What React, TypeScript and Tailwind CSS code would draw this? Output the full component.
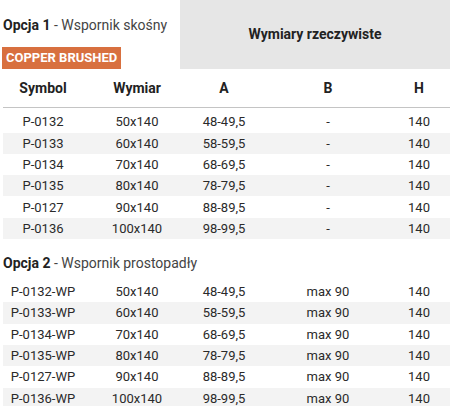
const opt1 = [
  ["P-0132", "50x140", "48-49,5", "-", "140"],
  ["P-0133", "60x140", "58-59,5", "-", "140"],
  ["P-0134", "70x140", "68-69,5", "-", "140"],
  ["P-0135", "80x140", "78-79,5", "-", "140"],
  ["P-0127", "90x140", "88-89,5", "-", "140"],
  ["P-0136", "100x140", "98-99,5", "-", "140"],
]

const opt2 = [
  ["P-0132-WP", "50x140", "48-49,5", "max 90", "140"],
  ["P-0133-WP", "60x140", "58-59,5", "max 90", "140"],
  ["P-0134-WP", "70x140", "68-69,5", "max 90", "140"],
  ["P-0135-WP", "80x140", "78-79,5", "max 90", "140"],
  ["P-0127-WP", "90x140", "88-89,5", "max 90", "140"],
  ["P-0136-WP", "100x140", "98-99,5", "max 90", "140"],
]

const cols = "grid grid-cols-[80px_108px_66px_142px_40px_1fr]"

function Rows({ rows }: { rows: string[][] }) {
  return (
    <div className="ml-[3px]">
      {rows.map((r, i) => (
        <div
          key={r[0]}
          className={`${cols} h-[21.3px] items-center text-[13px] text-[#2a2a2a] ${i % 2 === 1 ? "bg-[#f3f3f3]" : ""}`}
        >
          {r.map((c, j) => (
            <div key={j} className="text-center leading-none">
              {c}
            </div>
          ))}
          <div />
        </div>
      ))}
    </div>
  )
}

export default function App() {
  return (
    <div className="w-[450px] h-[406px] bg-white overflow-hidden font-['Roboto',sans-serif] text-[#222]">
      <div className="flex">
        <div className="w-[180px] pl-[3px] pt-[15px]">
          <div className="text-[14px] leading-[20px] whitespace-nowrap">
            <span className="font-bold">Opcja 1</span>
            <span className="text-[#444]"> - Wspornik skośny</span>
          </div>
          <div className="mt-[12px] -ml-[1px] inline-flex h-[22px] items-center bg-[#d8703f] px-[4px] text-[13px] font-bold text-white">
            COPPER BRUSHED
          </div>
        </div>
        <div className="flex h-[69px] flex-1 items-center justify-center bg-[#e6e6e6] text-[14px] font-bold">
          Wymiary rzeczywiste
        </div>
      </div>

      <div className={`${cols} ml-[3px] h-[39px] items-center border-b border-[#c4c4c4] text-[14px] font-bold`}>
        <div className="text-center">Symbol</div>
        <div className="text-center">Wymiar</div>
        <div className="text-center">A</div>
        <div className="text-center">B</div>
        <div className="text-center">H</div>
        <div />
      </div>

      <div className="pt-[3px]">
        <Rows rows={opt1} />
      </div>

      <div className="pl-[3px] pt-[14px] text-[14px] leading-[20px] whitespace-nowrap">
        <span className="font-bold">Opcja 2</span>
        <span className="text-[#444]"> - Wspornik prostopadły</span>
      </div>

      <div className="pt-[8px]">
        <Rows rows={opt2} />
      </div>
    </div>
  )
}
